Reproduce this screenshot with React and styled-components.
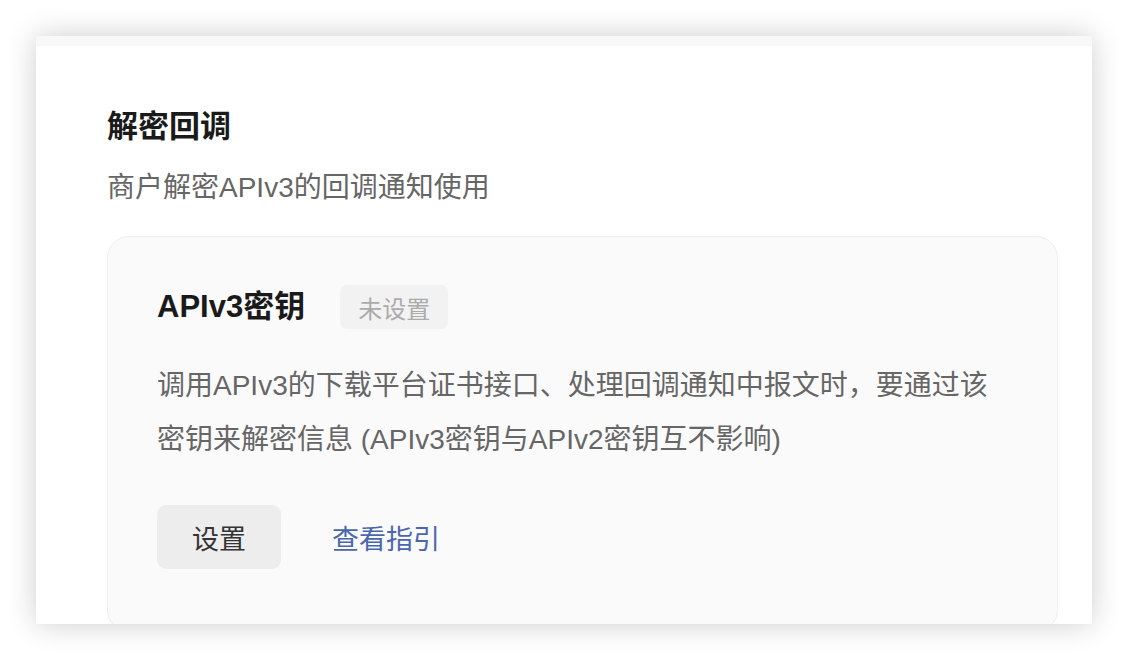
import React from "react";
import styled, { createGlobalStyle } from "styled-components";

const GlobalStyle = createGlobalStyle`
  html, body {
    margin: 0;
    padding: 0;
    background: #ffffff;
  }
  body {
    font-family: "Liberation Sans", "Noto Sans CJK SC", sans-serif;
  }
`;

const Page = styled.div`
  width: 1128px;
  height: 660px;
  padding: 36px 36px 0;
  box-sizing: border-box;
  overflow: hidden;
`;

const Panel = styled.section`
  height: 588px;
  background: #ffffff;
  border-top: 10px solid #f8f8f8;
  box-shadow: 0 0 28px rgba(0, 0, 0, 0.2);
  padding: 59px 34px 0 71px;
  box-sizing: border-box;
  overflow: hidden;
`;

const Title = styled.h2`
  margin: 0;
  font-size: 31px;
  line-height: 44px;
  font-weight: 700;
  color: #1a1a1a;
`;

const Subtitle = styled.p`
  margin: 19px 0 28px;
  font-size: 28px;
  line-height: 40px;
  color: #666666;
`;

const Card = styled.div`
  background: #fafafa;
  border: 1px solid #eeeeee;
  border-radius: 22px;
  padding: 48px 49px 62px;
`;

const CardHead = styled.div`
  display: flex;
  align-items: center;
  gap: 35px;
`;

const CardTitle = styled.h3`
  margin: 0;
  font-size: 31px;
  line-height: 44px;
  font-weight: 700;
  color: #1a1a1a;
`;

const Tag = styled.span`
  display: inline-flex;
  align-items: center;
  height: 44px;
  padding: 0 18px;
  border-radius: 7px;
  background: #f2f2f2;
  color: #ababab;
  font-size: 24px;
`;

const Desc = styled.p`
  margin: 30px 0 38px;
  font-size: 28px;
  line-height: 54px;
  color: #666666;
`;

const Actions = styled.div`
  display: flex;
  align-items: center;
  gap: 51px;
`;

const Button = styled.button`
  height: 64px;
  padding: 0 35px;
  border: none;
  border-radius: 9px;
  background: #ededed;
  color: #333333;
  font-family: inherit;
  font-size: 27px;
  cursor: pointer;
`;

const Link = styled.a`
  color: #4a67ae;
  font-size: 27px;
  text-decoration: none;
  cursor: pointer;
`;

const App = () => {
  return (
    <>
      <GlobalStyle />
      <Page>
        <Panel>
          <Title>解密回调</Title>
          <Subtitle>商户解密APIv3的回调通知使用</Subtitle>
          <Card>
            <CardHead>
              <CardTitle>APIv3密钥</CardTitle>
              <Tag>未设置</Tag>
            </CardHead>
            <Desc>
              调用APIv3的下载平台证书接口、处理回调通知中报文时，要通过该
              <br />
              密钥来解密信息 (APIv3密钥与APIv2密钥互不影响)
            </Desc>
            <Actions>
              <Button>设置</Button>
              <Link>查看指引</Link>
            </Actions>
          </Card>
        </Panel>
      </Page>
    </>
  );
};

export default App;
